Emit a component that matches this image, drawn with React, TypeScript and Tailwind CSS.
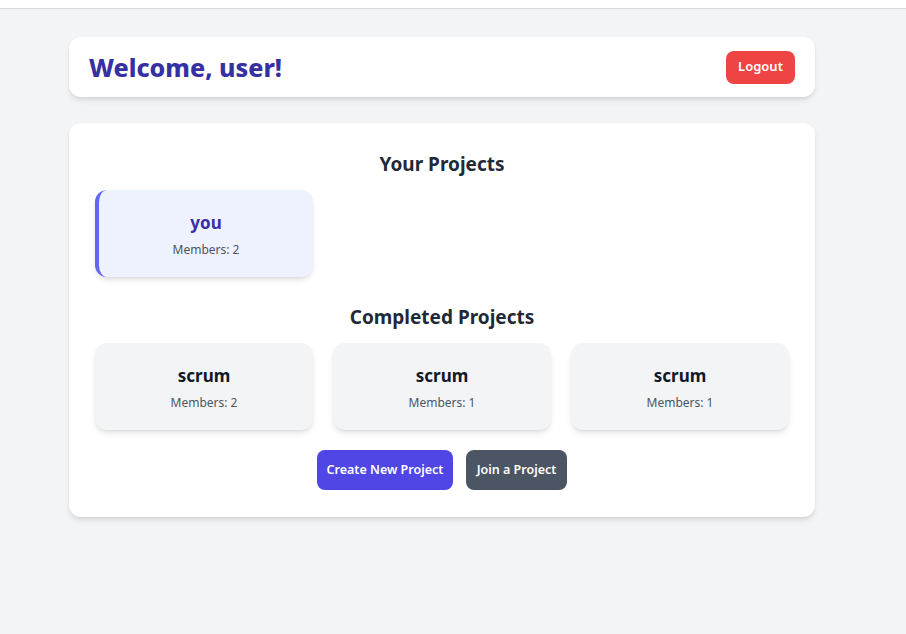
import React from "react";

const font = { fontFamily: '"Noto Sans", "Open Sans", sans-serif' };

function Card({ name, members, active }: { name: string; members: number; active?: boolean }) {
  return (
    <div
      className={
        "rounded-xl shadow-md pt-[21px] pb-[19px] text-center " +
        (active ? "bg-[#eef2ff] border-l-4 border-[#6366f1]" : "bg-[#f3f4f6]")
      }
    >
      <div className={"text-[17px] font-bold leading-[24px] " + (active ? "text-[#3730a3]" : "text-[#111827]")}>{name}</div>
      <div className="mt-[7px] text-[12px] leading-4 text-[#4b5563]">Members: {members}</div>
    </div>
  );
}

export default function App() {
  return (
    <div className="min-h-[634px] bg-[#f3f4f6]" style={font}>
      <div className="h-[9px] bg-white border-b border-[#d9d9d9]" />
      <div className="pl-[69px] pt-[28px]">
        <div className="w-[746px] h-[60px] bg-white rounded-xl shadow-md flex items-center justify-between px-5">
          <h1 className="text-[25px] font-extrabold text-[#3730a3] leading-8">Welcome, user!</h1>
          <button className="h-[33px] w-[69px] rounded-lg bg-[#ef4444] text-white text-[13px] font-semibold">Logout</button>
        </div>
        <div className="mt-[26px] w-[746px] bg-white rounded-xl shadow-md px-[26px] pt-[27px] pb-[27px]">
          <h2 className="text-center text-[19px] font-bold text-[#1f2937] leading-7">Your Projects</h2>
          <div className="mt-3 grid grid-cols-3 gap-5">
            <Card name="you" members={2} active />
          </div>
          <h2 className="mt-[26px] text-center text-[19px] font-bold text-[#1f2937] leading-7">Completed Projects</h2>
          <div className="mt-3 grid grid-cols-3 gap-5">
            <Card name="scrum" members={2} />
            <Card name="scrum" members={1} />
            <Card name="scrum" members={1} />
          </div>
          <div className="mt-5 flex justify-center gap-[13px]">
            <button className="h-10 w-[136px] rounded-lg bg-[#4f46e5] text-white text-[12.5px] font-semibold">Create New Project</button>
            <button className="h-10 w-[101px] rounded-lg bg-[#4b5563] text-white text-[12.5px] font-semibold">Join a Project</button>
          </div>
        </div>
      </div>
    </div>
  );
}
